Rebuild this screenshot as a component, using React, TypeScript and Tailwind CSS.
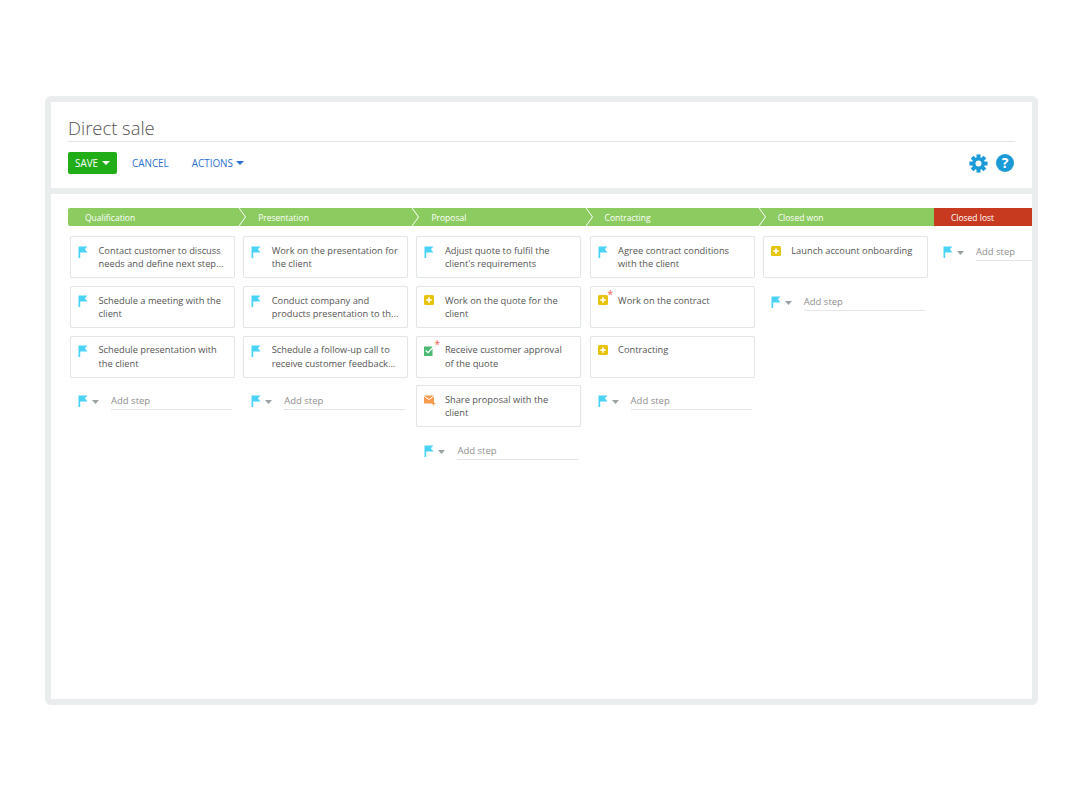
type StepIcon = "flag" | "plus" | "check" | "mail";

interface Step {
  text: string[];
  icon: StepIcon;
  required?: boolean;
}

interface Stage {
  name: string;
  steps: Step[];
}

const stages: Stage[] = [
  {
    name: "Qualification",
    steps: [
      { text: ["Contact customer to discuss", "needs and define next step..."], icon: "flag" },
      { text: ["Schedule a meeting with the", "client"], icon: "flag" },
      { text: ["Schedule presentation with", "the client"], icon: "flag" },
    ],
  },
  {
    name: "Presentation",
    steps: [
      { text: ["Work on the presentation for", "the client"], icon: "flag" },
      { text: ["Conduct company and", "products presentation to th..."], icon: "flag" },
      { text: ["Schedule a follow-up call to", "receive customer feedback..."], icon: "flag" },
    ],
  },
  {
    name: "Proposal",
    steps: [
      { text: ["Adjust quote to fulfil the", "client's requirements"], icon: "flag" },
      { text: ["Work on the quote for the", "client"], icon: "plus" },
      { text: ["Receive customer approval", "of the quote"], icon: "check", required: true },
      { text: ["Share proposal with the", "client"], icon: "mail" },
    ],
  },
  {
    name: "Contracting",
    steps: [
      { text: ["Agree contract conditions", "with the client"], icon: "flag" },
      { text: ["Work on the contract"], icon: "plus", required: true },
      { text: ["Contracting"], icon: "plus" },
    ],
  },
  {
    name: "Closed won",
    steps: [{ text: ["Launch account onboarding"], icon: "plus" }],
  },
];

function FlagIcon() {
  return (
    <svg width="10" height="12" viewBox="0 0 10 12" className="block shrink-0">
      <path d="M0.500 0.500h9L6.800 3.200 9.500 6.500H2.200V12H0.500z" fill="#4bd3f7" />
    </svg>
  );
}

function Icon({ type }: { type: StepIcon }) {
  if (type === "flag") return <FlagIcon />;
  if (type === "plus") {
    return (
      <svg width="10" height="10" viewBox="0 0 10 10" className="block">
        <rect width="10" height="10" rx="1.5" fill="#e6c30d" />
        <path d="M5 2.200v5.600M2.200 5h5.600" stroke="#fff" strokeWidth="1.500" />
      </svg>
    );
  }
  if (type === "check") {
    return (
      <svg width="11" height="11" viewBox="0 0 11 11" className="block">
        <rect width="8.500" height="9.500" y="1.500" fill="#4dbb73" />
        <path d="M1.800 5.500l2.200 2.200L9.800 1.500" stroke="#fff" strokeWidth="1.200" fill="none" />
      </svg>
    );
  }
  return (
    <svg width="12" height="11" viewBox="0 0 12 11" className="block">
      <rect width="10" height="8" y="0.500" rx="0.500" fill="#f79c4f" />
      <path d="M0 1l5 3.600L10 1" stroke="#fff" strokeWidth="1" fill="none" />
      <path d="M9.500 6.500v4M7.500 8.500h4" stroke="#f79c4f" strokeWidth="1.200" />
    </svg>
  );
}

function StepCard({ step }: { step: Step }) {
  return (
    <div className="relative h-[42px] mb-[7.700px] w-[165px] bg-white border border-[#e3e6e6] rounded-[2px] shadow-[0_0_1px_#eceeee] pl-[27.500px] pt-[6.600px] text-[9.300px] leading-[13.300px] text-[#555]">
      <div className="absolute left-[7px] top-[8.500px]">
        <Icon type={step.icon} />
      </div>
      {step.required && (
        <span className="absolute left-[17px] top-[2px] text-[10px] leading-[10px] text-[#f0594a]">*</span>
      )}
      {step.text.map((line) => (
        <div key={line} className="whitespace-nowrap">
          {line}
        </div>
      ))}
    </div>
  );
}

function AddStep() {
  return (
    <div className="flex items-start h-[26px] pl-[6px] pt-[10px]">
      <FlagIcon />
      <svg width="7" height="4" viewBox="0 0 7 4" className="ml-[4px] mt-[5px] shrink-0">
        <path d="M0 0h7L3.500 4z" fill="#9aa1a5" />
      </svg>
      <div className="ml-[12px] w-[121px] shrink-0 h-[16px] -mt-[1px] border-b border-[#e3e5e5] text-[9.500px] leading-[14px] text-[#8f8f8f] whitespace-nowrap">
        Add step
      </div>
    </div>
  );
}

function Chevron() {
  return (
    <svg width="8" height="18" viewBox="0 0 8 18" className="absolute right-[-6px] top-0 z-10">
      <path d="M0 0l6.500 9L0 18" fill="#8ccb60" stroke="#fff" strokeWidth="1" />
    </svg>
  );
}

const gearTeeth = [0, 45, 90, 135];

export default function App() {
  return (
    <div className="min-h-[800px] bg-white pt-[96px] pl-[45px] font-['Open_Sans',sans-serif]">
      <div className="w-[993px] h-[609px] bg-[#e9eded] rounded-[6px] p-[6px] flex flex-col gap-[6px]">
        {/* Header panel */}
        <div className="h-[86px] shrink-0 bg-white px-[17px] pt-[13px]">
          <div className="h-[27px] border-b border-[#e4e6e6] text-[18.400px] leading-[25px] font-light text-[#555]">
            Direct sale
          </div>
          <div className="flex items-center mt-[10px] h-[22px] text-[9.900px] leading-[24px]">
            <button className="flex items-center justify-center gap-[4px] w-[49px] h-[22px] bg-[#21ad17] rounded-[2px] text-white">
              SAVE
              <span className="w-0 h-0 border-x-[4px] border-x-transparent border-t-[4px] border-t-white" />
            </button>
            <span className="ml-[15px] text-[#2a70d0]">CANCEL</span>
            <span className="ml-[23px] text-[#2a70d0]">ACTIONS</span>
            <span className="ml-[3px] w-0 h-0 border-x-[4px] border-x-transparent border-t-[4px] border-t-[#2a70d0]" />
            <div className="ml-auto flex items-center gap-[8px] mr-[1px]">
              <svg width="19" height="19" viewBox="0 0 24 24" fill="#1a9bd7">
                {gearTeeth.map((a) => (
                  <rect key={a} x="9.500" y="0.500" width="5" height="23" transform={`rotate(${a} 12 12)`} />
                ))}
                <circle cx="12" cy="12" r="8" />
                <circle cx="12" cy="12" r="3.800" fill="#fff" />
              </svg>
              <span className="flex items-center justify-center w-[18px] h-[18px] rounded-full bg-[#1a9bd7] text-[14px] leading-none font-bold text-white">
                ?
              </span>
            </div>
          </div>
        </div>

        {/* Stages panel */}
        <div className="flex-1 bg-white pt-[14px] pl-[17px] overflow-hidden">
          <div className="flex h-[18px] text-[8.500px] leading-[19px] text-white">
            {stages.map((stage, i) => (
              <div
                key={stage.name}
                className={`relative w-[173.2px] shrink-0 bg-[#8ccb60] pl-[17px] ${i === 0 ? "rounded-l-[2px]" : ""}`}
              >
                {stage.name}
                {i < 4 && <Chevron />}
              </div>
            ))}
            <div className="w-[101px] shrink-0 -ml-[2px] border-l border-white bg-[#c83a20] pl-[18px]">Closed lost</div>
          </div>

          <div className="flex mt-[10.300px]">
            {stages.map((stage) => (
              <div key={stage.name} className="w-[173.2px] shrink-0 pl-[2px]">
                {stage.steps.map((step) => (
                  <StepCard key={step.text[0]} step={step} />
                ))}
                <div className="pl-[2px]">
                  <AddStep />
                </div>
              </div>
            ))}
            <div className="w-[99px] shrink-0 pl-[3px]">
              <AddStep />
            </div>
          </div>
        </div>
      </div>
    </div>
  );
}
